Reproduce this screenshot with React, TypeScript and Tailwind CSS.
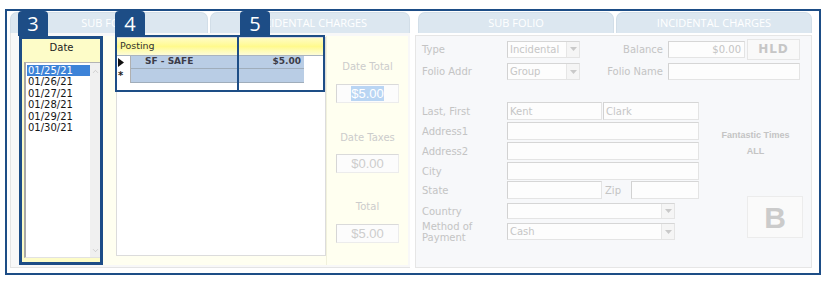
import { ChevronDown, ChevronUp } from "lucide-react";

const dates = ["01/25/21", "01/26/21", "01/27/21", "01/28/21", "01/29/21", "01/30/21"];

function Tab({ label, className = "" }: { label: string; className?: string }) {
  return (
    <div
      className={`h-[21px] rounded-t-[7px] bg-[#dce7f0] border border-b-0 border-[#d2dee8] flex items-center justify-center text-white font-['Open_Sans',sans-serif] text-[11px] ${className}`}
    >
      {label}
    </div>
  );
}

function Box({ className = "", children }: { className?: string; children?: React.ReactNode }) {
  return (
    <div
      className={`border border-[#e4e4e4] border-l-[#d2d2d2] border-t-[#d6d6d6] bg-[#fdfdfd] flex items-center shrink-0 ${className}`}
    >
      {children}
    </div>
  );
}

function Select({ value = "", className = "" }: { value?: string; className?: string }) {
  return (
    <Box className={className}>
      <span className="flex-1 pl-[2px] text-[#c6c6c6]">{value}</span>
      <span className="w-[13px] h-full border-l border-[#e6e6e6] bg-[#f5f5f5] flex items-center justify-center">
        <svg width="7" height="4" viewBox="0 0 7 4">
          <path d="M0 0 L7 0 L3.5 4 Z" fill="#c9c9c9" />
        </svg>
      </span>
    </Box>
  );
}

function Label({ children, className = "" }: { children: React.ReactNode; className?: string }) {
  return <div className={`w-[85px] shrink-0 text-[#c4c4c4] ${className}`}>{children}</div>;
}

function Money({ value, selected }: { value: string; selected?: boolean }) {
  return (
    <div className="w-[63px] h-[19px] border border-[#ececec] border-l-[#d6d6d6] border-t-[#dadada] bg-[#fcfcfc] flex items-center justify-center font-['Liberation_Sans',sans-serif] text-[13px] text-[#cdcdcd]">
      <span className={selected ? "bg-[#b9d5f3] text-white leading-[15px]" : "leading-[15px]"}>{value}</span>
    </div>
  );
}

export default function App() {
  return (
    <div className="relative w-[826px] h-[282px] bg-white overflow-hidden pt-[9px] pl-[5px] font-['DejaVu_Sans',sans-serif] text-[10px]">
      <div className="w-[816px] h-[266px] border-2 border-[#1d4d86] flex gap-[5px] pl-[3px] pt-[1px]">
        {/* left: dates + postings */}
        <div className="w-[400px] flex flex-col">
          <div className="h-[21px] flex gap-[2px]">
            <Tab label="SUB FOLIO" className="w-[198px]" />
            <Tab label="INCIDENTAL CHARGES" className="w-[200px] text-[10.5px] text-[#f4f7fa]" />
          </div>
          <div className="h-[235px] border-l border-b border-[#e4e4e4] bg-[#f8f8f8] pl-[9px] pt-[3px]">
            <div className="w-[388px] h-[229px] bg-[#fffff0] flex">
              {/* date list */}
              <div className="w-[83px] flex flex-col bg-[#fdfcc8]">
                <div className="h-[26px] pt-[6px] leading-[12px] text-center text-[#222]">Date</div>
                <div className="ml-[4px] w-[76px] h-[196px] bg-white flex border-l-2 border-l-[#a9a9a9] border-t border-t-[#b4b4b4] border-b border-b-[#e2e2e2]">
                  <div className="flex-1 pt-[2px] pl-[1px] text-[#161616]">
                    {dates.map((d, i) => (
                      <div
                        key={d}
                        className={`h-[11.4px] leading-[11.4px] pl-[1px] ${i === 0 ? "bg-[#3d83d8] text-white" : ""}`}
                      >
                        {d}
                      </div>
                    ))}
                  </div>
                  <div className="w-[10px] bg-[#f0f0f0] flex flex-col items-center justify-between pt-[4px] pb-[2px]">
                    <ChevronUp size={9} strokeWidth={1.5} className="text-[#b8b8b8]" />
                    <ChevronDown size={9} strokeWidth={1.5} className="text-[#b8b8b8]" />
                  </div>
                </div>
              </div>

              {/* posting grid */}
              <div className="ml-[13px] mt-[1px] w-[210px] h-[219px] border border-[#dcdcdc] bg-white flex flex-col">
                <div className="h-[17px] px-[3px] flex items-center text-[9.5px] text-[#333] bg-linear-to-b from-[#fffcc4] via-[#fffa8c] to-[#fdfcd8]">
                  Posting
                </div>
                <div className="h-[14px] flex border-t border-[#a9b4bf]">
                  <div className="w-[14px] flex items-center pl-[1px] border-r border-[#b0b0b0]">
                    <svg width="6" height="9" viewBox="0 0 6 9">
                      <path d="M0 0 L6 4.5 L0 9 Z" fill="#111" />
                    </svg>
                  </div>
                  <div className="w-[173px] bg-[#b9cde5] border-b border-[#9fadbb] flex items-center justify-between pl-[14px] pr-[3px] text-[9px] font-bold text-[#3c3c48]">
                    <span>SF - SAFE</span>
                    <span>$5.00</span>
                  </div>
                </div>
                <div className="h-[14px] flex">
                  <div className="w-[14px] flex items-center pl-[1px] border-r border-[#b0b0b0] text-[10px] font-bold text-[#222] leading-[10px]">
                    *
                  </div>
                  <div className="w-[173px] bg-[#b9cde5] border-b border-[#9fadbb]" />
                </div>
              </div>

              {/* totals */}
              <div className="flex-1 border-l border-[#f1f1dc] flex flex-col items-center text-[#cccccc]">
                <div className="mt-[25px] h-[12px] leading-[12px]">Date Total</div>
                <div className="mt-[11px]">
                  <Money value="$5.00" selected />
                </div>
                <div className="mt-[29px] h-[12px] leading-[12px]">Date Taxes</div>
                <div className="mt-[10px]">
                  <Money value="$0.00" />
                </div>
                <div className="mt-[28px] h-[12px] leading-[12px]">Total</div>
                <div className="mt-[11px]">
                  <Money value="$5.00" />
                </div>
              </div>
            </div>
          </div>
        </div>

        {/* right: sub folio form */}
        <div className="w-[397px] flex flex-col">
          <div className="h-[21px] flex gap-[2px] pl-[3px]">
            <Tab label="SUB FOLIO" className="w-[196px]" />
            <Tab label="INCIDENTAL CHARGES" className="w-[196px] text-[10.5px]" />
          </div>
          <div className="mt-[2px] h-[233px] border border-[#e6e6e6] bg-[#f7f8fa] pl-[6px] pt-[1px] flex flex-col">
            <div className="mt-[1px] h-[22px] flex items-center">
              <Label>Type</Label>
              <Select value="Incidental" className="w-[73px] h-[17px]" />
              <div className="w-[83px] text-right text-[#c4c4c4]">Balance</div>
              <Box className="ml-[5px] w-[77px] h-[17px] justify-end pr-[3px] text-[#c4c4c4]">$0.00</Box>
              <div className="ml-[2px] w-[53px] h-[21px] border border-[#e6e6e6] bg-[#f9f9f9] flex items-center justify-center text-[12px] font-bold tracking-[1px] text-[#c6c6c6]">
                HLD
              </div>
            </div>
            <div className="mt-[2px] h-[19px] flex items-center">
              <Label>Folio Addr</Label>
              <Select value="Group" className="w-[73px] h-[17px]" />
              <div className="w-[83px] text-right text-[#c4c4c4]">Folio Name</div>
              <Box className="ml-[5px] w-[132px] h-[17px]" />
            </div>

            <div className="mt-[21px] flex">
              <div className="w-[278px] flex flex-col">
                <div className="h-[18px] flex items-center">
                  <Label>Last, First</Label>
                  <Box className="w-[95px] h-[18px] pl-[2px] text-[#c6c6c6]">Kent</Box>
                  <Box className="ml-[1px] w-[96px] h-[18px] pl-[2px] text-[#c6c6c6]">Clark</Box>
                </div>
                <div className="mt-[2px] h-[18px] flex items-center">
                  <Label>Address1</Label>
                  <Box className="w-[192px] h-[18px]" />
                </div>
                <div className="mt-[2px] h-[18px] flex items-center">
                  <Label>Address2</Label>
                  <Box className="w-[192px] h-[18px]" />
                </div>
                <div className="mt-[2px] h-[18px] flex items-center">
                  <Label>City</Label>
                  <Box className="w-[192px] h-[18px]" />
                </div>
                <div className="mt-[1px] h-[18px] flex items-center">
                  <Label>State</Label>
                  <Box className="w-[95px] h-[18px]" />
                  <div className="w-[29px] pl-[3px] text-[#c4c4c4]">Zip</div>
                  <Box className="w-[68px] h-[18px]" />
                </div>
                <div className="mt-[4px] h-[16px] flex items-center">
                  <Label>Country</Label>
                  <Select className="w-[168px] h-[16px]" />
                </div>
                <div className="mt-[4px] h-[17px] flex items-center">
                  <Label className="leading-[11px]">
                    Method of
                    <br />
                    Payment
                  </Label>
                  <Select value="Cash" className="w-[168px] h-[17px]" />
                </div>
              </div>

              <div className="flex-1 flex flex-col">
                <div className="mt-[28px] leading-[11px] text-center font-['Liberation_Sans',sans-serif] text-[9px] font-bold text-[#c4c4c4]">
                  Fantastic Times
                </div>
                <div className="mt-[5px] leading-[11px] text-center font-['Liberation_Sans',sans-serif] text-[9px] font-bold text-[#c4c4c4]">
                  ALL
                </div>
                <div className="mt-[39px] ml-[47px] w-[56px] h-[42px] border border-[#ececec] bg-[#fafafa] flex items-center justify-center font-['Liberation_Sans',sans-serif] text-[30px] font-bold text-[#cbcbcb]">
                  B
                </div>
              </div>
            </div>
          </div>
        </div>
      </div>

      {/* callouts */}
      <div className="absolute left-[18px] top-[11px] w-[30px] h-[25px] rounded-t-[4px] bg-[#1d4d86] flex items-center justify-center text-white font-['Open_Sans',sans-serif] text-[20px]">
        3
      </div>
      <div className="absolute left-[19px] top-[36px] w-[84px] h-[229px] border-[3px] border-[#1d4d86]" />
      <div className="absolute left-[115px] top-[11px] w-[30px] h-[25px] rounded-t-[4px] bg-[#1d4d86] flex items-center justify-center text-white font-['Open_Sans',sans-serif] text-[20px]">
        4
      </div>
      <div className="absolute left-[115px] top-[35px] w-[210px] h-[57px] border-2 border-[#1d4d86]" />
      <div className="absolute left-[240px] top-[11px] w-[30px] h-[25px] rounded-t-[4px] bg-[#1d4d86] flex items-center justify-center text-white font-['Open_Sans',sans-serif] text-[20px]">
        5
      </div>
      <div className="absolute left-[237px] top-[35px] w-[88px] h-[57px] border-2 border-[#1d4d86]" />
    </div>
  );
}
